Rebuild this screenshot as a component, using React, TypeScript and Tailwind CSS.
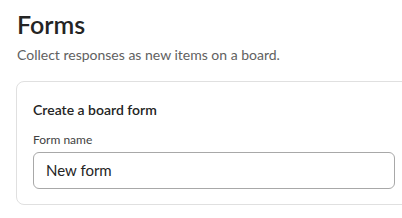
import React from 'react';

function App() {
  return (
    <div
      className="w-[402px] h-[218px] overflow-hidden bg-white"
      style={{ fontFamily: 'Lato, "Open Sans", sans-serif' }}
    >
      <div className="pl-[17px] pt-[8px]">
        <h1 className="text-[25px] leading-[32px] font-semibold text-[#242424]">Forms</h1>
        <p className="mt-[5px] text-[14px] leading-[20px] text-[#616161]">
          Collect responses as new items on a board.
        </p>
      </div>
      <div className="ml-[16px] mt-[16px] w-[400px] h-[124px] rounded-[8px] border border-[#e0e0e0] pl-[16px] pr-[16px] pt-[18px]">
        <h2 className="text-[14px] leading-[20px] font-semibold text-[#242424]">Create a board form</h2>
        <label className="block mt-[12px] text-[12px] leading-[16px] text-[#424242]">Form name</label>
        <div className="mt-[4px] w-[362px] h-[37px] rounded-[6px] border border-[#a8a8a8] flex items-center px-[12px] text-[15px] text-[#242424]">
          New form
        </div>
      </div>
    </div>
  );
}

export default App;
